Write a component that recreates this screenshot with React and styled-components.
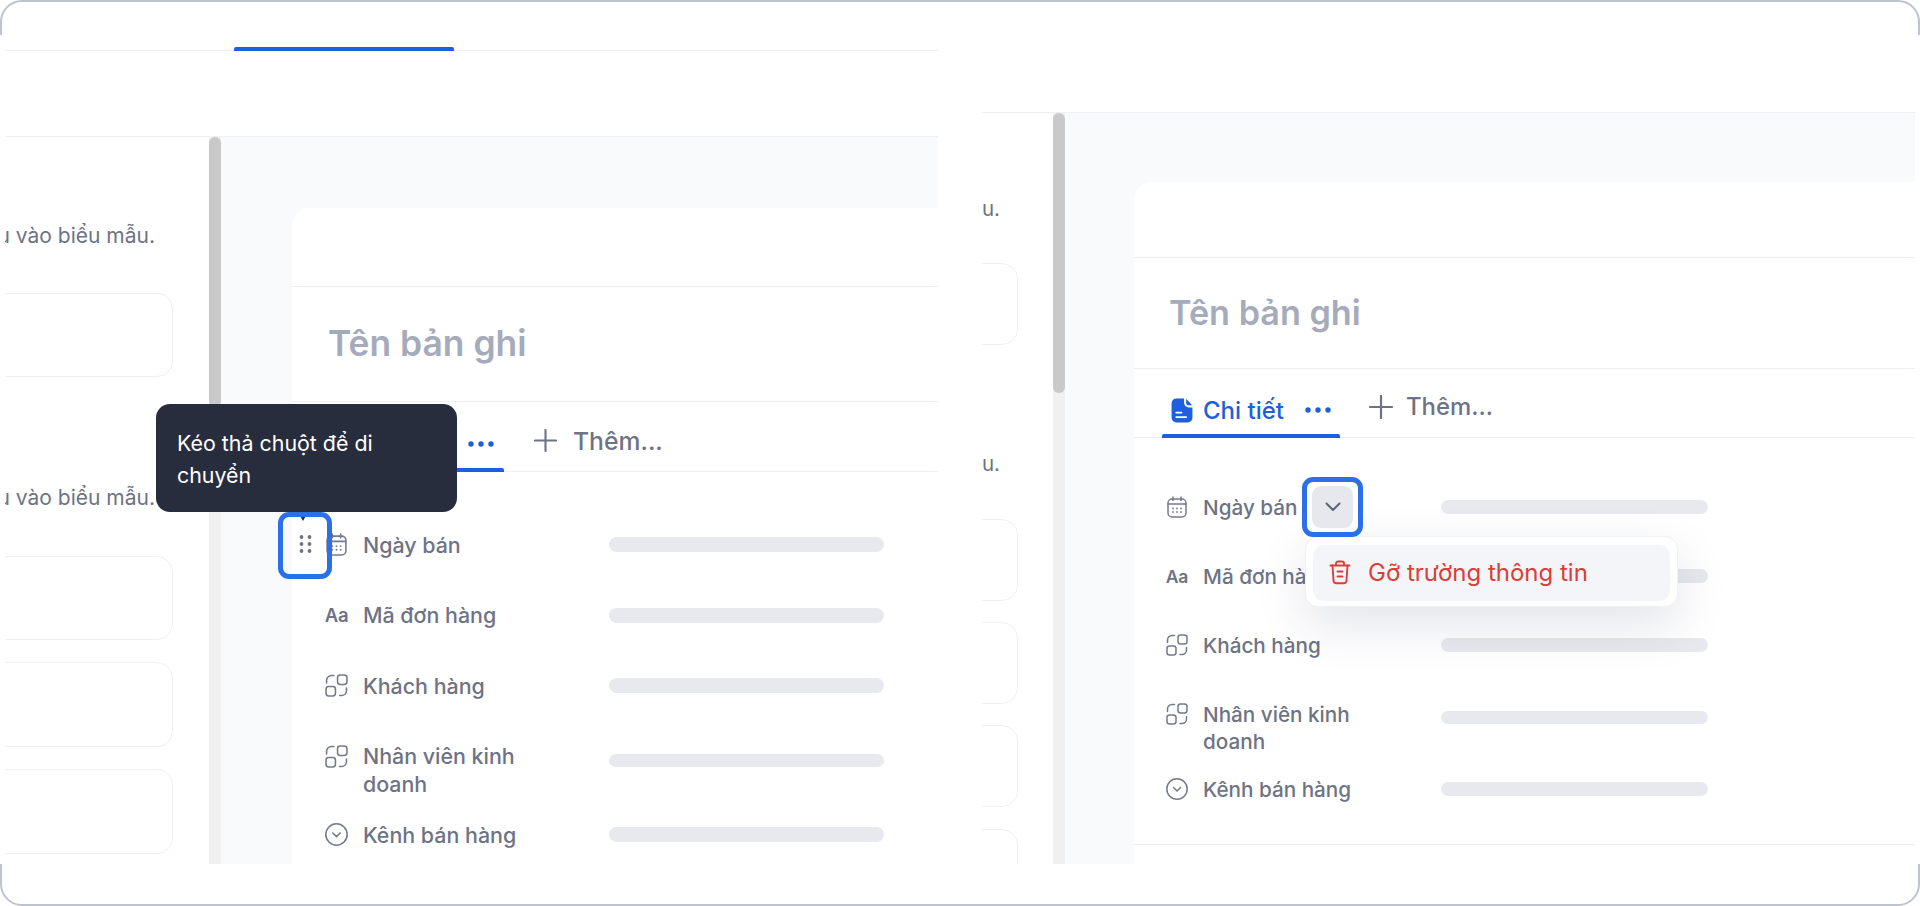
import React from 'react';
import styled, { createGlobalStyle } from 'styled-components';

const Global = createGlobalStyle`
  html, body { margin: 0; padding: 0; background: #fff; }
  body { font-family: Inter, "Noto Sans", sans-serif; overflow: hidden; }
  * { box-sizing: border-box; }
`;

const LEFT = {
  side: 204, sideRight: 36, track: 12, thumb: 270, canvasPad: 71,
  head: 79, title: 115, tabs: 70, titleSize: 35.4, titleLeft: 36, tabLeft: 28, tabGap: 30, tabWidth: 184,
  tabFont: 24, tabTop: 14, dotsLeft: 16, addTop: 8, addFont: 24.7, addGap: 16, plus: 23, listTop: 37.5, rowPad: 21.25, lineHeight: 28, labelFont: 21.4,
  labelWidth: 261, labelMax: 175, iconGap: 15, rowLeft: 33, barWidth: 275, barHeight: 15, barTop: 6.5, tallBarTop: 11.5, tallBarHeight: 13,
  tallBottom: 1, iconSize: 23, sideFont: 21, cardRadius: 18,
};
const RIGHT = {
  side: 71, sideRight: 35, track: 12, thumb: 280, canvasPad: 69,
  head: 76, title: 111, tabs: 69, titleSize: 34.2, titleLeft: 35, tabLeft: 28, tabGap: 29, tabWidth: 178,
  tabFont: 24, tabTop: 14, dotsLeft: 11, addTop: 7, addFont: 23.9, addGap: 13, plus: 24, listTop: 34.5, rowPad: 21, lineHeight: 27, labelFont: 20.7,
  labelWidth: 253, labelMax: 170, iconGap: 15, rowLeft: 32, barWidth: 267, barHeight: 14, barTop: 6.5, tallBarTop: 10.5, tallBarHeight: 13,
  tallBottom: 0, iconSize: 22, sideFont: 20.5, cardRadius: 18,
};

const Frame = styled.div`
  width: 1920px;
  height: 906px;
  border: 2px solid #bfc3cf;
  border-radius: 22px;
  background: #fff;
`;
const Stage = styled.div`
  display: flex;
  justify-content: space-between;
  height: 829px;
  margin: 33px -2px 0;
  padding: 0 5px;
  background: #fff;
`;
const Panel = styled.section`
  position: relative;
  width: 933px;
  height: 829px;
  display: flex;
  flex-direction: column;
`;
const Clip = styled.div`
  flex: 1;
  min-height: 0;
  display: flex;
  flex-direction: column;
  overflow: hidden;
`;
const Strip = styled.div`
  height: 16px;
  flex: none;
  padding-left: 229px;
  display: flex;
  align-items: flex-end;
  border-bottom: 1.5px solid #eef0f4;
`;
const StripBar = styled.div`
  width: 220px;
  height: 4px;
  margin-bottom: -1px;
  border-radius: 2px 2px 0 0;
  background: #1d5fdc;
`;
const Toolbar = styled.div`
  flex: none;
  height: ${p => p.$h}px;
  border-bottom: 1.5px solid #eef0f4;
`;
const Body = styled.div`
  flex: 1;
  min-height: 0;
  display: flex;
`;
const Sidebar = styled.aside`
  flex: none;
  width: ${p => p.$m.side}px;
  padding-right: ${p => p.$m.sideRight}px;
  display: flex;
  flex-direction: column;
  overflow: hidden;
`;
const Hint = styled.div`
  flex: none;
  height: 24px;
  margin-top: ${p => p.$top}px;
  margin-right: 18px;
  display: flex;
  justify-content: flex-end;
  white-space: nowrap;
  font-size: ${p => p.$size}px;
  line-height: 24px;
  color: #6d7385;
`;
const FieldBox = styled.div`
  flex: none;
  height: ${p => p.$h}px;
  margin-top: ${p => p.$top}px;
  margin-left: -24px;
  border: 1.5px solid #eff0f3;
  border-radius: 16px;
  background: #fff;
`;
const Track = styled.div`
  flex: none;
  width: ${p => p.$w}px;
  background: #f0f0f0;
`;
const Thumb = styled.div`
  height: ${p => p.$h}px;
  border-radius: 6px;
  background: #c9c9c9;
`;
const Canvas = styled.main`
  flex: 1;
  min-width: 0;
  padding: ${p => p.$pad}px 0 0 ${p => p.$pad}px;
  background: #f9fafc;
`;
const Card = styled.article`
  position: relative;
  background: #fff;
  border-top-left-radius: ${p => p.$r}px;
  min-height: 760px;
`;
const CardHead = styled.div`
  height: ${p => p.$h}px;
  border-bottom: 1.5px solid #eceef3;
`;
const TitleBlock = styled.div`
  height: ${p => p.$h}px;
  padding: 0 0 2px ${p => p.$left}px;
  display: flex;
  align-items: center;
  border-bottom: 1.5px solid #eceef3;
`;
const Title = styled.h1`
  margin: 0;
  font-size: ${p => p.$size}px;
  font-weight: 600;
  color: #a5abbb;
`;
const Tabs = styled.nav`
  height: ${p => p.$m.tabs}px;
  padding-left: ${p => p.$m.tabLeft}px;
  display: flex;
  align-items: stretch;
  gap: ${p => p.$m.tabGap}px;
  border-bottom: 1.5px solid #eceef3;
`;
const Tab = styled.div`
  position: relative;
  flex: none;
  width: ${p => p.$w}px;
  padding: ${p => p.$top}px 0 0 9px;
  display: flex;
  align-items: center;
  gap: 10px;
  font-size: ${p => p.$size}px;
  font-weight: 500;
  color: #1d5fdc;
  white-space: nowrap;
  &::after {
    content: '';
    position: absolute;
    left: 0;
    right: 0;
    bottom: -1px;
    height: 4px;
    border-radius: 2px 2px 0 0;
    background: #1d5fdc;
  }
`;
const TabDots = styled.svg`
  margin-left: ${p => p.$left}px;
  flex: none;
`;
const AddTab = styled.div`
  padding-top: ${p => p.$top}px;
  display: flex;
  align-items: center;
  gap: ${p => p.$gap}px;
  font-size: ${p => p.$size}px;
  font-weight: 500;
  color: #6d7385;
`;
const Rows = styled.div`
  position: relative;
  padding: ${p => p.$top}px 0 20.5px ${p => p.$left}px;
  border-bottom: 1.5px solid #eceef3;
`;
const Row = styled.div`
  display: grid;
  grid-template-columns: ${p => p.$m.iconSize}px ${p => p.$m.labelWidth}px ${p => p.$m.barWidth}px;
  padding: ${p => p.$m.rowPad}px 0 ${p => (p.$tall ? p.$m.tallBottom : p.$m.rowPad)}px;
  align-items: start;
`;
const IconCell = styled.div`
  height: ${p => p.$h}px;
  display: flex;
  align-items: center;
  justify-content: center;
  color: #747a8d;
`;
const TextIcon = styled.span`
  font-size: ${p => p.$size}px;
  font-weight: 600;
  color: #6d7385;
  letter-spacing: -0.2px;
`;
const Label = styled.div`
  padding-left: ${p => p.$m.iconGap}px;
  max-width: ${p => p.$m.labelMax + p.$m.iconGap}px;
  font-size: ${p => p.$m.labelFont}px;
  line-height: ${p => p.$m.lineHeight}px;
  font-weight: 500;
  color: #6d7385;
`;
const Bar = styled.div`
  height: ${p => (p.$tall ? p.$m.tallBarHeight : p.$m.barHeight)}px;
  margin-top: ${p => (p.$tall ? p.$m.tallBarTop : p.$m.barTop)}px;
  border-radius: 8px;
  background: #e8e9ee;
`;
const Tooltip = styled.div`
  position: absolute;
  left: 151px;
  top: 369px;
  z-index: 4;
  width: 301px;
  height: 108px;
  padding: 23px 21px;
  border-radius: 14px;
  background: #282d3e;
  color: #fff;
  font-size: 21.4px;
  line-height: 32px;
  &::after {
    content: '';
    position: absolute;
    left: 142px;
    top: 100%;
    border: 5px solid transparent;
    border-top: 9px solid #282d3e;
    border-bottom: 0;
  }
`;
const Highlight = styled.div`
  position: absolute;
  z-index: 5;
  left: ${p => p.$x}px;
  top: ${p => p.$y}px;
  width: ${p => p.$w}px;
  height: ${p => p.$h}px;
  display: flex;
  align-items: center;
  justify-content: center;
  border: 5px solid #2b6fe9;
  border-radius: 11px;
`;
const GripWrap = styled.div`
  margin-top: -4px;
  display: flex;
  color: #6d7385;
`;
const ChevronButton = styled.div`
  width: 41px;
  height: 42px;
  display: flex;
  align-items: center;
  justify-content: center;
  border-radius: 9px;
  background: #e7e8ed;
  color: #5d6478;
`;
const Menu = styled.div`
  position: absolute;
  z-index: 4;
  left: 171px;
  top: 98px;
  width: 373px;
  height: 71px;
  padding: 7.5px 7px 5.5px;
  border: 1.5px solid #f0f1f5;
  border-radius: 13px;
  background: #fff;
  box-shadow: 0 18px 50px rgba(40, 50, 90, 0.13);
`;
const MenuItem = styled.div`
  height: 100%;
  padding-left: 16px;
  display: flex;
  align-items: center;
  gap: 17px;
  border-radius: 11px;
  background: #f4f5f9;
  color: #dc3d36;
  font-size: 24px;
  font-weight: 400;
  white-space: nowrap;
`;

const Calendar = ({ s }) => (
  <svg width={s} height={s} viewBox="1 1 22 22" fill="none" stroke="currentColor" strokeWidth="1.5" strokeLinecap="round">
    <rect x="3" y="4" width="18" height="18" rx="4" />
    <path d="M3 9h18M8 2v3.5M16 2v3.5" />
    <path d="M8 13.5h.01M12 13.5h.01M16 13.5h.01M8 17h.01M12 17h.01M16 17h.01" strokeWidth="1.8" />
  </svg>
);
const Relation = ({ s }) => (
  <svg width={s} height={s} viewBox="1 1 22 22" fill="none" stroke="currentColor" strokeWidth="1.5" strokeLinecap="round" strokeLinejoin="round">
    <rect x="13" y="2" width="9" height="9" rx="2.5" />
    <rect x="2" y="13" width="9" height="9" rx="2.5" />
    <path d="M2.5 9.5V7a4.5 4.5 0 0 1 4.5-4.5h2.5" />
    <path d="M21.5 14.5V17a4.5 4.5 0 0 1-4.5 4.5h-2" />
  </svg>
);
const CircleDown = ({ s }) => (
  <svg width={s} height={s} viewBox="1 1 22 22" fill="none" stroke="currentColor" strokeWidth="1.5" strokeLinecap="round" strokeLinejoin="round">
    <circle cx="12" cy="12" r="10.2" />
    <path d="M8.5 10.5 12 14l3.5-3.5" />
  </svg>
);
const DocIcon = () => (
  <svg width="22" height="25" viewBox="0 0 21 24" style={{ flex: 'none' }}>
    <path fill="#1d5fdc" d="M5 .5h7.5v4A4.500 4.500 0 0 0 17 9h3.500v10a4.500 4.500 0 0 1-4.500 4.500H5A4.500 4.500 0 0 1 .5 19V5A4.500 4.500 0 0 1 5 .5z" />
    <path fill="#1d5fdc" d="M14.500 .8l5.700 6.200H17a2.500 2.500 0 0 1-2.500-2.500z" />
    <path stroke="#fff" strokeWidth="1.800" strokeLinecap="round" d="M5 14h5M5 18.300h9.500" />
  </svg>
);
const Dots = ({ color, left }) => (
  <TabDots $left={left} width="26" height="6" viewBox="0 0 26 6">
    <g fill={color}>
      <circle cx="3" cy="3" r="2.700" /><circle cx="13" cy="3" r="2.700" /><circle cx="23" cy="3" r="2.700" />
    </g>
  </TabDots>
);
const Plus = ({ s }) => (
  <svg width={s} height={s} viewBox="0 0 24 24" fill="none" stroke="#6d7385" strokeWidth="2.200" strokeLinecap="round">
    <path d="M12 1v22M1 12h22" />
  </svg>
);
const Grip = () => (
  <svg width="13" height="18" viewBox="0 0 13 18" fill="currentColor">
    <circle cx="2.500" cy="2" r="1.900" /><circle cx="10.500" cy="2" r="1.900" />
    <circle cx="2.500" cy="9" r="1.900" /><circle cx="10.500" cy="9" r="1.900" />
    <circle cx="2.500" cy="16" r="1.900" /><circle cx="10.500" cy="16" r="1.900" />
  </svg>
);
const Chevron = () => (
  <svg width="16" height="10" viewBox="0 0 16 10" fill="none" stroke="currentColor" strokeWidth="2" strokeLinecap="round" strokeLinejoin="round">
    <path d="M1.500 1.500 8 8l6.500-6.500" />
  </svg>
);
const Trash = () => (
  <svg width="22" height="25" viewBox="0 0 22 25" fill="none" stroke="#dc3d36" strokeWidth="1.900" strokeLinecap="round" strokeLinejoin="round" style={{ flex: 'none' }}>
    <path d="M1.500 5.500h19M7 5.500V3.500a2 2 0 0 1 2-2h4a2 2 0 0 1 2 2v2" />
    <path d="M3.500 5.500l1 15a3 3 0 0 0 3 2.800h7a3 3 0 0 0 3-2.800l1-15" />
    <path d="M8.500 11.500h5M8.500 16.500h5" />
  </svg>
);

const FIELDS = [
  { key: 'date', label: 'Ngày bán', icon: 'calendar' },
  { key: 'code', label: 'Mã đơn hàng', icon: 'text' },
  { key: 'customer', label: 'Khách hàng', icon: 'relation' },
  { key: 'staff', label: 'Nhân viên kinh doanh', icon: 'relation', tall: true },
  { key: 'channel', label: 'Kênh bán hàng', icon: 'circle' },
];

const FieldIcon = ({ type, m }) => {
  if (type === 'calendar') return <Calendar s={m.iconSize} />;
  if (type === 'relation') return <Relation s={m.iconSize} />;
  if (type === 'circle') return <CircleDown s={m.iconSize} />;
  return <TextIcon $size={m.iconSize - 4.5}>Aa</TextIcon>;
};

const Mockup = ({ m, strip, toolbar, boxes, overlay, panelOverlay }) => (
  <Panel>
    {panelOverlay}
    <Clip>
      {strip && <Strip><StripBar /></Strip>}
      <Toolbar $h={toolbar} />
      <Body>
        <Sidebar $m={m}>
          {boxes.map((b, i) => (
            <React.Fragment key={i}>
              {b.hint && <Hint $top={b.hintTop} $size={m.sideFont}>{b.hint}</Hint>}
              <FieldBox $top={b.top} $h={b.h} />
            </React.Fragment>
          ))}
        </Sidebar>
        <Track $w={m.track}><Thumb $h={m.thumb} /></Track>
        <Canvas $pad={m.canvasPad}>
          <Card $r={m.cardRadius}>
            <CardHead $h={m.head} />
            <TitleBlock $h={m.title} $left={m.titleLeft}>
              <Title $size={m.titleSize}>Tên bản ghi</Title>
            </TitleBlock>
            <Tabs $m={m}>
              <Tab $w={m.tabWidth} $size={m.tabFont} $top={m.tabTop}>
                <DocIcon />
                <span>Chi tiết</span>
                <Dots color="#1d5fdc" left={m.dotsLeft} />
              </Tab>
              <AddTab $gap={m.addGap} $size={m.addFont} $top={m.addTop}>
                <Plus s={m.plus} />
                <span>Thêm...</span>
              </AddTab>
            </Tabs>
            <Rows $top={m.listTop} $left={m.rowLeft}>
              {FIELDS.map(f => (
                <Row key={f.key} $m={m} $tall={f.tall}>
                  <IconCell $h={m.lineHeight}><FieldIcon type={f.icon} m={m} /></IconCell>
                  <Label $m={m}>{f.label}</Label>
                  <Bar $m={m} $tall={f.tall} />
                </Row>
              ))}
              {overlay}
            </Rows>
          </Card>
        </Canvas>
      </Body>
    </Clip>
  </Panel>
);

export default function App() {
  return (
    <>
      <Global />
      <Frame>
        <Stage>
          <Mockup
            m={LEFT}
            strip
            toolbar={86}
            boxes={[
              { hint: 'u vào biểu mẫu.', hintTop: 87, top: 45, h: 84 },
              { hint: 'u vào biểu mẫu.', hintTop: 109, top: 46, h: 84 },
              { top: 22, h: 85 },
              { top: 22, h: 85 },
            ]}
            panelOverlay={<Tooltip>Kéo thả chuột để di chuyển</Tooltip>}
            overlay={
              <Highlight $x={-14} $y={40} $w={54} $h={67}>
                <GripWrap><Grip /></GripWrap>
              </Highlight>
            }
          />
          <Mockup
            m={RIGHT}
            toolbar={78}
            boxes={[
              { hint: 'u.', hintTop: 84, top: 42, h: 82 },
              { hint: 'u.', hintTop: 107, top: 43, h: 82 },
              { top: 21, h: 82 },
              { top: 21, h: 82 },
              { top: 22, h: 82 },
            ]}
            overlay={
              <>
                <Highlight $x={168} $y={39} $w={61} $h={60}>
                  <ChevronButton><Chevron /></ChevronButton>
                </Highlight>
                <Menu>
                  <MenuItem><Trash /><span>Gỡ trường thông tin</span></MenuItem>
                </Menu>
              </>
            }
          />
        </Stage>
      </Frame>
    </>
  );
}
